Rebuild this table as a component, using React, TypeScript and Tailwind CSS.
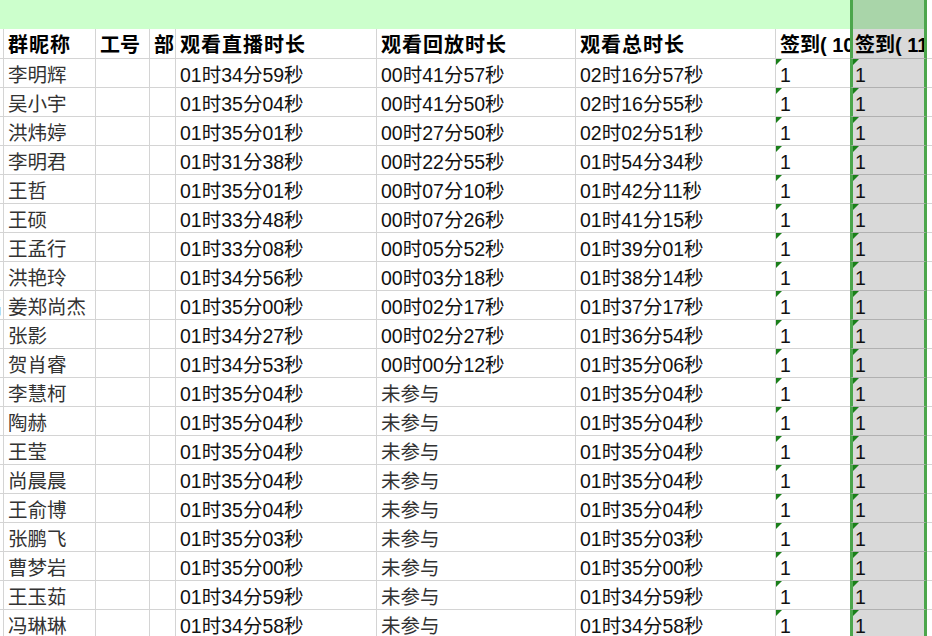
const rows: [string, string, string, string][] = [
  ['李明辉', '01时34分59秒', '00时41分57秒', '02时16分57秒'],
  ['吴小宇', '01时35分04秒', '00时41分50秒', '02时16分55秒'],
  ['洪炜婷', '01时35分01秒', '00时27分50秒', '02时02分51秒'],
  ['李明君', '01时31分38秒', '00时22分55秒', '01时54分34秒'],
  ['王哲', '01时35分01秒', '00时07分10秒', '01时42分11秒'],
  ['王硕', '01时33分48秒', '00时07分26秒', '01时41分15秒'],
  ['王孟行', '01时33分08秒', '00时05分52秒', '01时39分01秒'],
  ['洪艳玲', '01时34分56秒', '00时03分18秒', '01时38分14秒'],
  ['姜郑尚杰', '01时35分00秒', '00时02分17秒', '01时37分17秒'],
  ['张影', '01时34分27秒', '00时02分27秒', '01时36分54秒'],
  ['贺肖睿', '01时34分53秒', '00时00分12秒', '01时35分06秒'],
  ['李慧柯', '01时35分04秒', '未参与', '01时35分04秒'],
  ['陶赫', '01时35分04秒', '未参与', '01时35分04秒'],
  ['王莹', '01时35分04秒', '未参与', '01时35分04秒'],
  ['尚晨晨', '01时35分04秒', '未参与', '01时35分04秒'],
  ['王俞博', '01时35分04秒', '未参与', '01时35分04秒'],
  ['张鹏飞', '01时35分03秒', '未参与', '01时35分03秒'],
  ['曹梦岩', '01时35分00秒', '未参与', '01时35分00秒'],
  ['王玉茹', '01时34分59秒', '未参与', '01时34分59秒'],
  ['冯琳琳', '01时34分58秒', '未参与', '01时34分58秒'],
]

const cell = 'shrink-0 overflow-hidden whitespace-nowrap border-r border-b border-[#d4d4d4] pl-[4px] flex items-center'

function Flag() {
  return (
    <span className="absolute left-0 top-0 h-0 w-0 border-t-[6px] border-r-[6px] border-t-[#1a7f1a] border-r-transparent" />
  )
}

export default function App() {
  return (
    <div
      className="w-[932px] h-[636px] overflow-hidden bg-white text-[#111]"
      style={{ fontFamily: '"Liberation Sans", "Noto Sans CJK SC", sans-serif' }}
    >
      {/* formula band */}
      <div className="flex h-[29px]">
        <div className="w-[850px] bg-[#ccffcc]" />
        <div className="w-[77px] border-x-[3px] border-[#4ca64c] bg-[#a9d5a9]" />
        <div className="flex-1 bg-white" />
      </div>

      {/* header */}
      <div className="flex h-[30px] text-[20px] font-bold text-black">
        <div className={`${cell} w-[4px] !pl-0`} />
        <div className={`${cell} w-[92px] pt-[3px] tracking-[1px]`}>群昵称</div>
        <div className={`${cell} w-[54px] pt-[3px]`}>工号</div>
        <div className={`${cell} w-[26px] pt-[3px]`}>部门</div>
        <div className={`${cell} w-[201px] pt-[3px] tracking-[1px]`}>观看直播时长</div>
        <div className={`${cell} w-[199px] pt-[3px] tracking-[1px]`}>观看回放时长</div>
        <div className={`${cell} w-[200px] pt-[3px] tracking-[1px]`}>观看总时长</div>
        <div className={`${cell} w-[74px] border-r-0 pt-[3px]`}>签到( 10</div>
        <div className="flex h-[30px] w-[77px] shrink-0 items-center overflow-hidden whitespace-nowrap border-x-[3px] border-b border-x-[#4ca64c] border-b-[#b0b0b0] bg-[#d9d9d9] pl-[2px] pt-[3px]">
          <span className="shrink-0">签到( 11</span>
        </div>
        <div className="flex-1 border-b border-[#d4d4d4]" />
      </div>

      {rows.map(([name, live, replay, total], i) => (
        <div key={i} className="flex h-[29px] text-[19.5px] leading-none">
          <div className={`${cell} w-[4px] !pl-0 justify-end text-[#333]`}>
            {i === 8 ? <span className="shrink-0 pt-[6px]">名</span> : null}
          </div>
          <div className={`${cell} w-[92px] pt-[6px] text-[#333]`}>{name}</div>
          <div className={`${cell} w-[54px]`} />
          <div className={`${cell} w-[26px]`} />
          <div className={`${cell} w-[201px] pt-[6px]`}>{live}</div>
          <div className={`${cell} w-[199px] pt-[6px] ${replay === '未参与' ? 'text-[#333]' : ''}`}>{replay}</div>
          <div className={`${cell} w-[200px] pt-[6px]`}>{total}</div>
          <div className={`${cell} relative w-[74px] border-r-0 pt-[6px]`}>
            <Flag />
            1
          </div>
          <div className="relative flex w-[77px] shrink-0 items-center border-x-[3px] border-b border-x-[#4ca64c] border-b-[#b0b0b0] bg-[#d9d9d9] pl-[2px] pt-[6px]">
            <Flag />
            1
          </div>
          <div className="flex-1 border-b border-[#d4d4d4]" />
        </div>
      ))}
    </div>
  )
}
